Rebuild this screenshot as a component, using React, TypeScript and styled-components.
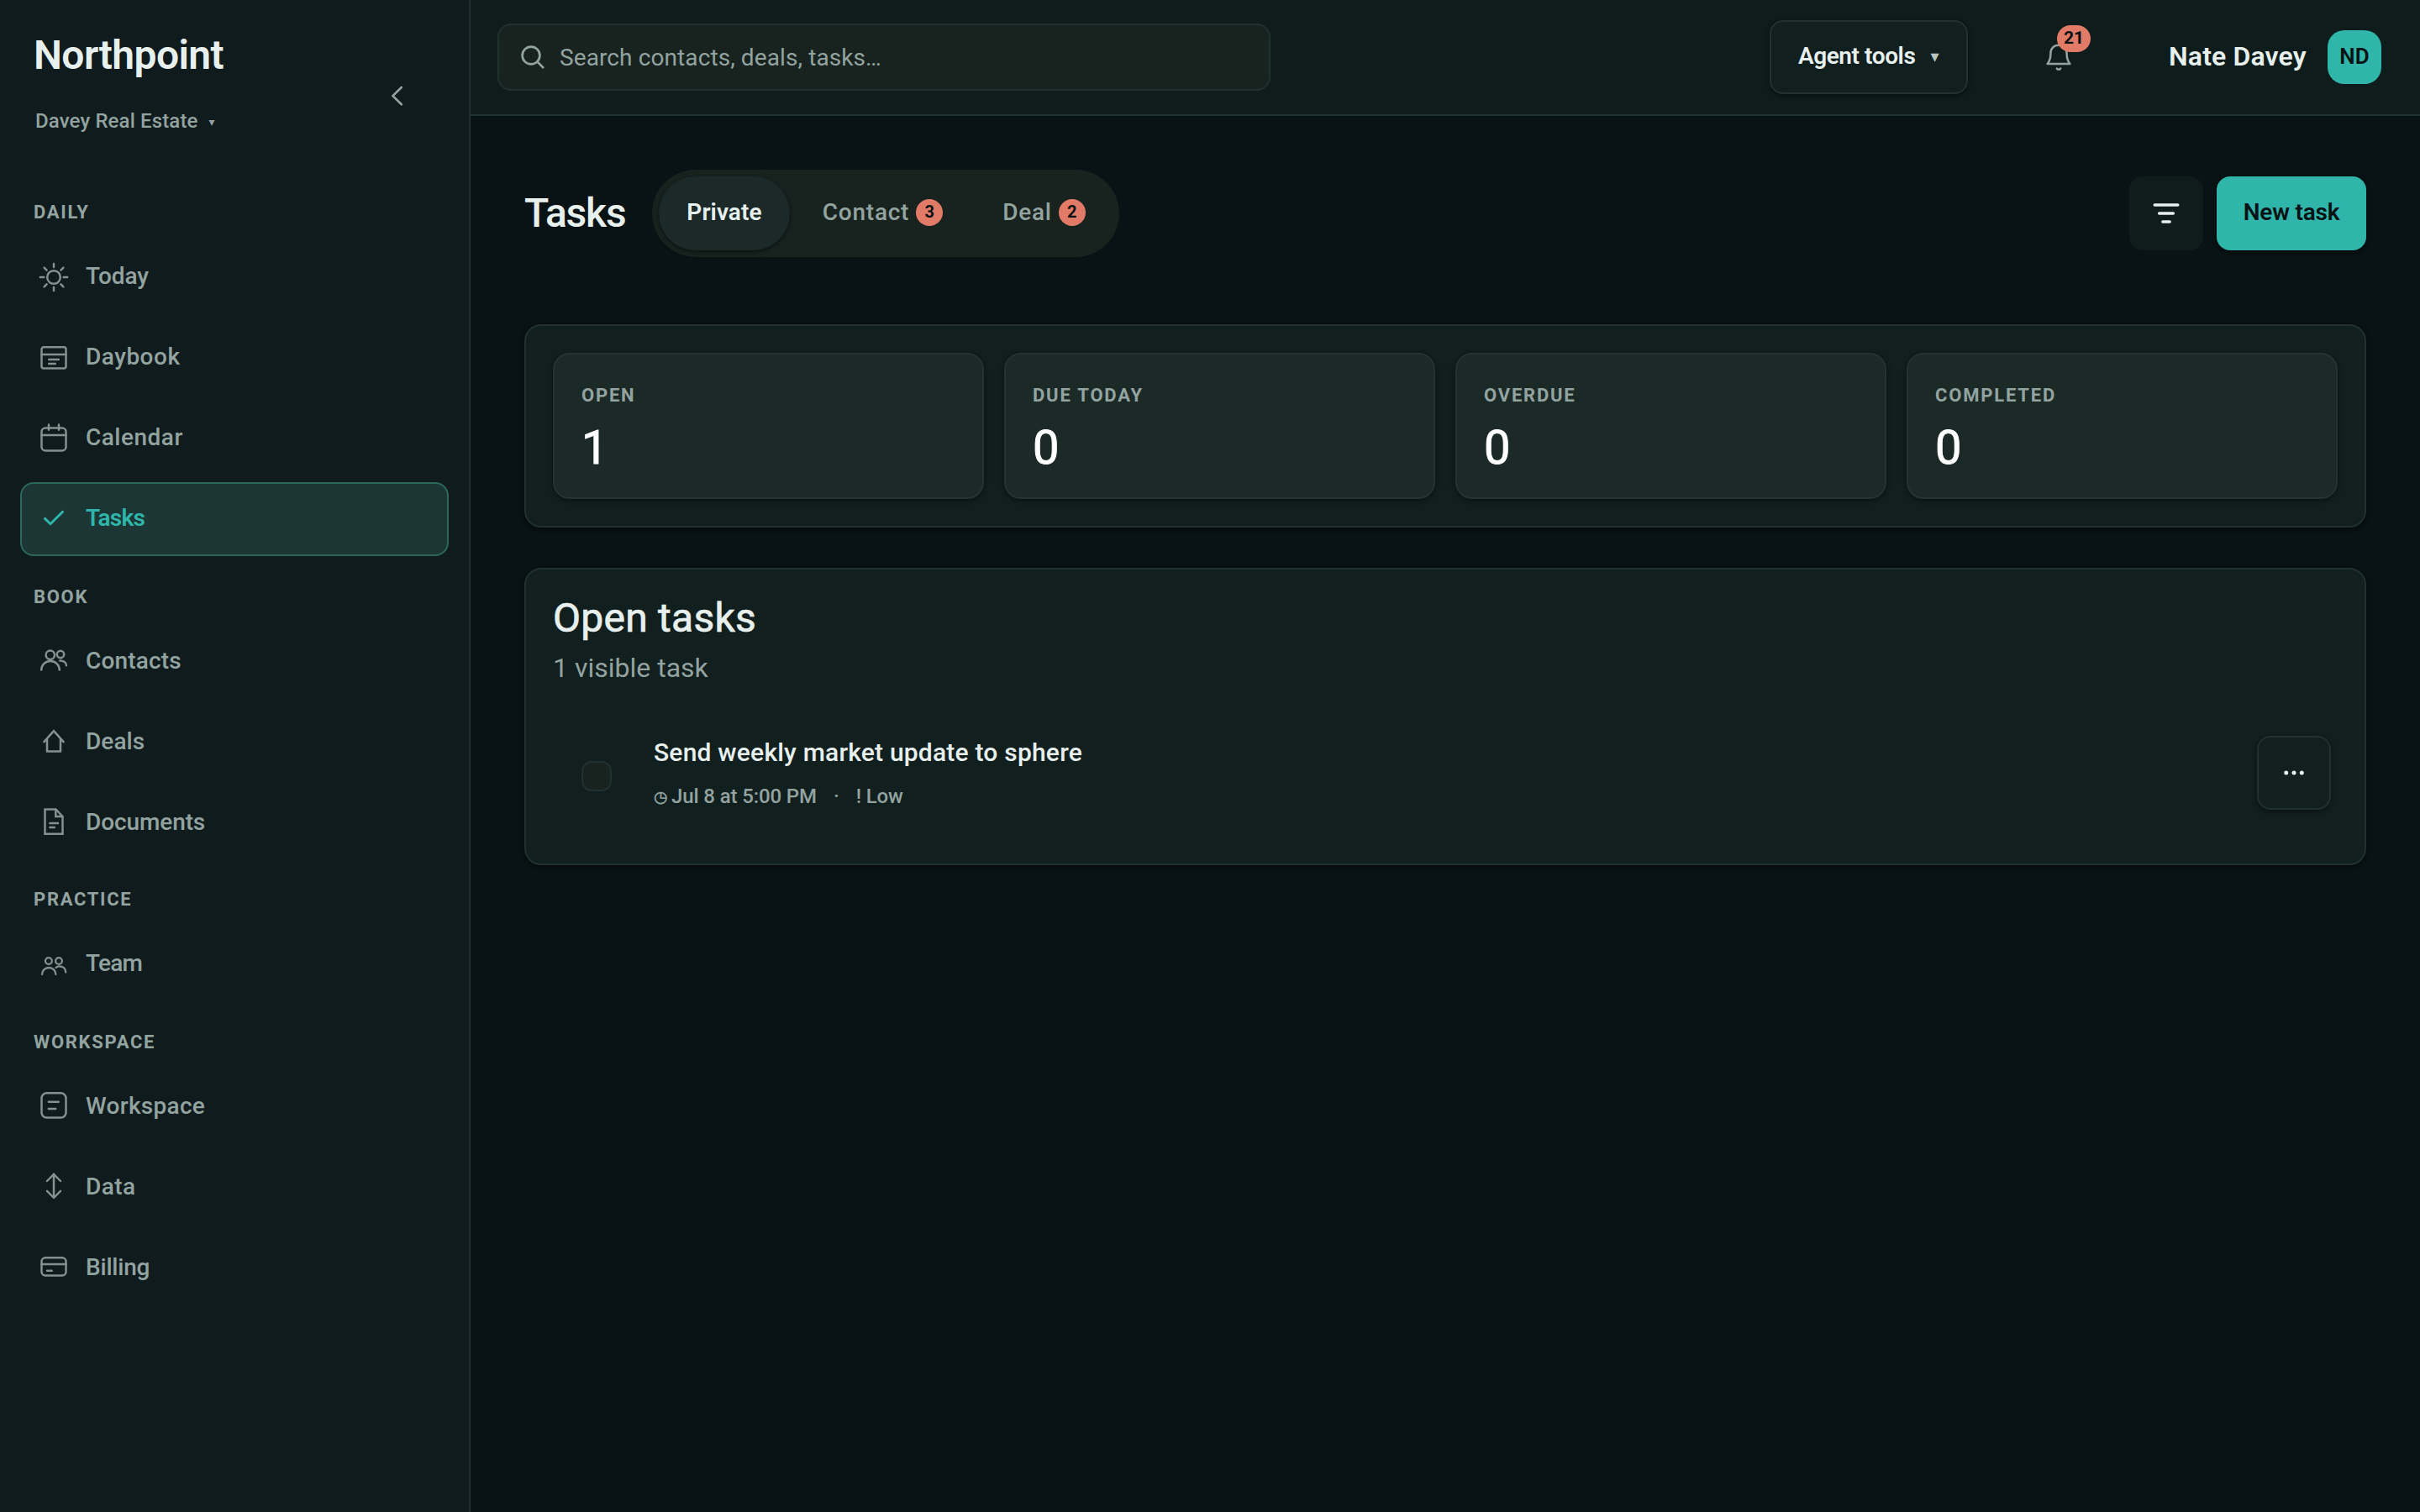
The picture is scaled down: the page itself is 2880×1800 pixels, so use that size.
import React from "react";
import styled, { createGlobalStyle, css } from "styled-components";

const c = {
  page: "#091214",
  sidebar: "#101b1d",
  header: "#0f1c1c",
  panel: "#121f1f",
  card: "#1c2a27",
  field: "#18231f",
  line: "#20312f",
  text: "#e8f0ee",
  muted: "#92a3a0",
  teal: "#2fb5aa",
  ink: "#081114",
  coral: "#e27a68",
};

const GlobalStyle = createGlobalStyle`
  *, *::before, *::after { box-sizing: border-box; }
  body {
    margin: 0;
    background: ${c.page};
    color: ${c.text};
    font-family: Roboto, "Liberation Sans", "DejaVu Sans", sans-serif;
  }
  button { font: inherit; color: inherit; border: 0; padding: 0; background: none; }
  h1, h2, p { margin: 0; }
`;

const shadow = css`
  box-shadow: 0 2px 6px rgba(0, 0, 0, 0.5);
`;

const Shell = styled.div`
  display: grid;
  grid-template-columns: 560px 1fr;
  width: 2880px;
  height: 1800px;
  overflow: hidden;
  white-space: nowrap;
`;

/* Sidebar */

const Sidebar = styled.aside`
  background: ${c.sidebar};
  border-right: 2px solid ${c.line};
  padding: 36px 24px 0;
`;

const BrandRow = styled.div`
  display: flex;
  justify-content: space-between;
  height: 168px;
  padding: 0 51px 0 16px;
`;

const BrandName = styled.div`
  font-size: 48px;
  font-weight: 600;
  line-height: 60px;
  letter-spacing: -0.6px;
`;

const OrgSwitch = styled.button`
  display: flex;
  align-items: center;
  gap: 13px;
  margin: 32px 0 0 2px;
  font-size: 24px;
  font-weight: 500;
  line-height: 32px;
  letter-spacing: 0.13px;
  color: ${c.muted};
`;

const Caret = styled.span<{ $size: number }>`
  padding-top: 1px;
  font-family: "DejaVu Sans", sans-serif;
  font-size: ${(p) => p.$size}px;
  line-height: 1;
`;

const CollapseButton = styled.button`
  width: 20px;
  height: 28px;
  margin-top: 64px;
  color: ${c.muted};
`;

const GroupLabel = styled.div<{ $before: number }>`
  padding: ${(p) => p.$before}px 0 15px 16px;
  font-size: 22px;
  font-weight: 700;
  line-height: 36px;
  letter-spacing: 1.7px;
  color: ${c.muted};
`;

const NavList = styled.nav`
  display: flex;
  flex-direction: column;
  gap: 8px;
`;

const NavItem = styled.a<{ $active?: boolean }>`
  display: flex;
  align-items: center;
  gap: 20px;
  height: 88px;
  padding: 0 20px;
  border: 2px solid ${(p) => (p.$active ? "#2d685f" : "transparent")};
  border-radius: 16px;
  background: ${(p) => (p.$active ? "#1b3635" : "transparent")};
  color: ${(p) => (p.$active ? c.teal : c.muted)};
  font-size: 28px;
  font-weight: ${(p) => (p.$active ? 600 : 500)};

  svg { opacity: ${(p) => (p.$active ? 1 : 0.88)}; }
`;

const NavText = styled.span<{ $track: number }>`
  padding-bottom: 3px;
  letter-spacing: ${(p) => p.$track}px;
`;

/* Top bar */

const Column = styled.div`
  display: flex;
  flex-direction: column;
  min-width: 0;
`;

const TopBar = styled.header`
  display: flex;
  align-items: center;
  height: 138px;
  padding: 0 46px 0 32px;
  background: ${c.header};
  border-bottom: 2px solid ${c.line};
`;

const SearchBox = styled.div`
  display: flex;
  align-items: center;
  gap: 18px;
  width: 920px;
  height: 80px;
  padding: 0 26px;
  margin-right: auto;
  border: 2px solid ${c.line};
  border-radius: 16px;
  background: ${c.field};
  color: ${c.muted};
  font-size: 28px;
  letter-spacing: 0.1px;
`;

const AgentTools = styled.button`
  display: flex;
  align-items: center;
  justify-content: center;
  gap: 18px;
  width: 236px;
  height: 88px;
  padding: 0 1px 3px 0;
  border: 2px solid ${c.line};
  border-radius: 16px;
  background: ${c.panel};
  font-size: 28px;
  font-weight: 600;
  letter-spacing: -0.42px;
  ${shadow}

  ${Caret} { color: #b9c5c2; }
`;

const BellButton = styled.button`
  position: relative;
  display: flex;
  align-items: center;
  justify-content: center;
  width: 88px;
  height: 88px;
  margin: 0 87px 0 64px;
  color: ${c.muted};
`;

const BellBadge = styled.span`
  position: absolute;
  top: 6px;
  left: 42px;
  width: 40px;
  height: 32px;
  border-radius: 16px;
  background: ${c.coral};
  color: ${c.ink};
  font-size: 21px;
  font-weight: 700;
  line-height: 31px;
  text-align: center;
`;

const UserName = styled.span`
  width: 189px;
  padding-bottom: 2px;
  font-size: 32px;
  font-weight: 600;
  letter-spacing: 0.15px;
`;

const Avatar = styled.div`
  width: 64px;
  height: 64px;
  border-radius: 20px;
  background: ${c.teal};
  color: ${c.ink};
  font-size: 26px;
  font-weight: 600;
  line-height: 63px;
  text-align: center;
`;

/* Page */

const Page = styled.main`
  flex: 1;
  display: flex;
  flex-direction: column;
  padding: 64px;
`;

const PageHead = styled.div`
  display: flex;
  align-items: center;
  height: 104px;
  margin-bottom: 80px;
`;

const Title = styled.h1`
  width: 152px;
  padding-bottom: 1px;
  font-size: 48px;
  font-weight: 500;
  letter-spacing: -1.2px;
`;

const Tabs = styled.div`
  display: flex;
  gap: 6px;
  padding: 8px;
  margin-right: auto;
  border-radius: 52px;
  background: ${c.field};
`;

const Tab = styled.button<{ $active?: boolean; $width: number; $track: number }>`
  display: flex;
  align-items: center;
  justify-content: center;
  gap: 8px;
  width: ${(p) => p.$width}px;
  height: 88px;
  padding: 0 0 3px ${(p) => (p.$active ? 0 : 1)}px;
  border-radius: 44px;
  font-size: 28px;
  font-weight: ${(p) => (p.$active ? 600 : 500)};
  letter-spacing: ${(p) => p.$track}px;
  color: ${(p) => (p.$active ? c.text : c.muted)};
  ${(p) =>
    p.$active &&
    css`
      background: #1b2928;
      ${shadow}
    `}
`;

const Count = styled.span`
  width: 32px;
  height: 32px;
  border-radius: 50%;
  background: ${c.coral};
  color: ${c.ink};
  font-size: 20px;
  font-weight: 700;
  letter-spacing: 0;
  line-height: 30px;
  text-align: center;
`;

const FilterButton = styled.button`
  display: grid;
  place-items: center;
  width: 88px;
  height: 88px;
  margin-right: 16px;
  border-radius: 16px;
  background: #101b1c;
`;

const NewTask = styled.button`
  width: 178px;
  height: 88px;
  padding-bottom: 3px;
  border-radius: 16px;
  background: ${c.teal};
  color: ${c.ink};
  font-size: 28px;
  font-weight: 600;
  letter-spacing: -0.19px;
  ${shadow}
`;

const Panel = styled.section`
  padding: 32px;
  border: 2px solid ${c.line};
  border-radius: 20px;
  background: ${c.panel};
  ${shadow}
`;

const Stats = styled(Panel)`
  display: grid;
  grid-template-columns: repeat(4, 1fr);
  gap: 24px;
  margin-bottom: 48px;
`;

const StatCard = styled.div`
  height: 174px;
  padding: 33px 32px;
  border: 2px solid #23332f;
  border-radius: 20px;
  background: ${c.card};
  ${shadow}
`;

const StatLabel = styled.div`
  font-size: 22px;
  font-weight: 700;
  line-height: 32px;
  letter-spacing: 1.8px;
  color: ${c.muted};
`;

const StatValue = styled.div`
  margin-top: 14px;
  font-size: 56px;
  font-weight: 400;
  line-height: 64px;
  color: #fff;
  -webkit-text-stroke: 0.9px currentColor;
`;

const TaskPanel = styled(Panel)`
  height: 354px;
`;

const PanelTitle = styled.h2`
  padding-top: 1px;
  font-size: 48px;
  font-weight: 400;
  line-height: 50px;
  letter-spacing: 0.25px;
  -webkit-text-stroke: 0.7px currentColor;
`;

const PanelNote = styled.p`
  margin-top: 14px;
  font-size: 32px;
  line-height: 40px;
  letter-spacing: 0;
  color: ${c.muted};
`;

const TaskRow = styled.div`
  display: flex;
  align-items: center;
  height: 88px;
  margin-top: 61px;
  padding: 0 8px 0 34px;
`;

const Checkbox = styled.span`
  width: 36px;
  height: 36px;
  margin: 8px 50px 0 0;
  border: 2px solid ${c.line};
  border-radius: 12px;
  background: ${c.field};
`;

const TaskBody = styled.div`
  flex: 1;
`;

const TaskTitle = styled.div`
  font-size: 30px;
  font-weight: 500;
  line-height: 40px;
  letter-spacing: 0.21px;
`;

const TaskMeta = styled.div`
  display: flex;
  gap: 20px;
  margin-top: 16px;
  font-size: 24px;
  font-weight: 500;
  line-height: 32px;
  letter-spacing: -0.12px;
  color: ${c.muted};
`;

const Due = styled.span`
  display: flex;
  width: 194px;
`;

const Clock = styled.span`
  width: 21px;
  font-family: "DejaVu Sans", sans-serif;
  font-size: 19px;
  line-height: 33px;
  -webkit-text-stroke: 0.6px currentColor;
`;

const MoreButton = styled.button`
  display: grid;
  place-items: center;
  width: 88px;
  height: 88px;
  border: 2px solid ${c.line};
  border-radius: 16px;
  background: ${c.panel};
  ${shadow}
`;

const Icon = ({ children, stroke = 2.5 }: { children: React.ReactNode; stroke?: number }) => (
  <svg
    width="36"
    height="36"
    viewBox="0 0 36 36"
    fill="none"
    stroke="currentColor"
    strokeWidth={stroke}
    strokeLinecap="round"
    strokeLinejoin="round"
  >
    {children}
  </svg>
);

const icons = {
  sun: (
    <Icon>
      <circle cx="18" cy="18" r="7.8" />
      <path d="M18 1.9v4.2M18 29.9v4.2M1.9 18h4.4M29.7 18h4.4M6.6 6.6l3 3M26.4 26.4l3 3M6.6 29.4l3-3M26.4 9.6l3-3" />
    </Icon>
  ),
  daybook: (
    <Icon>
      <rect x="3.5" y="5.3" width="29" height="25.2" rx="2.5" />
      <path d="M3.5 14h29M12.2 20h11.6M12.2 25h7.6" />
    </Icon>
  ),
  calendar: (
    <Icon>
      <rect x="3.5" y="5.6" width="29" height="26.8" rx="4.5" />
      <path d="M3.5 14h29M12 1.6v6.2M24 1.6v6.2" />
    </Icon>
  ),
  check: (
    <Icon stroke={3}>
      <path d="M7.5 17.4l6.5 6.4L28.6 9.3" />
    </Icon>
  ),
  contacts: (
    <Icon>
      <circle cx="13.8" cy="9.7" r="5.2" />
      <circle cx="26" cy="9" r="4.2" />
      <path d="M3.2 27.6c0-6 4.6-10.6 10.8-10.6s10.8 4.6 10.8 10.6M25.3 16.4c4.4 0 7.6 2.2 7.7 5.8" />
    </Icon>
  ),
  deals: (
    <Icon>
      <path d="M6.4 17.2L18 4.2l11.6 13M10 13.6v14.8h16V13.6" strokeLinejoin="miter" />
    </Icon>
  ),
  documents: (
    <Icon>
      <path d="M7.5 1.4h13l8 8.6v20.8h-21zM20.3 1.4V10h8.2" strokeLinejoin="miter" />
      <path d="M13.4 18h9.6M13.4 23h5.4" />
    </Icon>
  ),
  team: (
    <Icon stroke={2.3}>
      <circle cx="11.9" cy="14" r="3.9" />
      <circle cx="24" cy="14" r="3.9" />
      <path d="M4 30c0-4.5 3.4-8 8.2-8s8.2 3.5 8.2 8M20.6 21.9c1-1 2.3-1.6 3.9-1.6 4.4 0 7.7 2.7 7.7 7.2" />
    </Icon>
  ),
  workspace: (
    <Icon>
      <rect x="3.5" y="1.3" width="29" height="29.3" rx="6" />
      <path d="M11.8 11.8h12M11.8 20h8.4" />
    </Icon>
  ),
  data: (
    <Icon>
      <path d="M18 1.8v28M10 10l8-8.2 8 8.2M10 21.8l8 8.2 8-8.2" />
    </Icon>
  ),
  billing: (
    <Icon>
      <rect x="3.5" y="5.3" width="29" height="21.2" rx="4.5" />
      <path d="M3.5 13h29M10 20.8h5.7" />
    </Icon>
  ),
};

type Entry = { name: string; icon: keyof typeof icons; track: number; active?: boolean };

const groups: { label: string; before: number; items: Entry[] }[] = [
  {
    label: "DAILY",
    before: 31,
    items: [
      { name: "Today", icon: "sun", track: -0.1 },
      { name: "Daybook", icon: "daybook", track: 0.5 },
      { name: "Calendar", icon: "calendar", track: 0.5 },
      { name: "Tasks", icon: "check", track: -0.75, active: true },
    ],
  },
  {
    label: "BOOK",
    before: 31,
    items: [
      { name: "Contacts", icon: "contacts", track: 0.15 },
      { name: "Deals", icon: "deals", track: 0.05 },
      { name: "Documents", icon: "documents", track: -0.1 },
    ],
  },
  { label: "PRACTICE", before: 29, items: [{ name: "Team", icon: "team", track: -0.8 }] },
  {
    label: "WORKSPACE",
    before: 31,
    items: [
      { name: "Workspace", icon: "workspace", track: 0.3 },
      { name: "Data", icon: "data", track: 0.4 },
      { name: "Billing", icon: "billing", track: -0.2 },
    ],
  },
];

const stats = [
  ["OPEN", "1"],
  ["DUE TODAY", "0"],
  ["OVERDUE", "0"],
  ["COMPLETED", "0"],
];

export default function App() {
  return (
    <>
      <GlobalStyle />
      <Shell>
        <Sidebar>
          <BrandRow>
            <div>
              <BrandName>Northpoint</BrandName>
              <OrgSwitch>
                Davey Real Estate <Caret $size={14}>▾</Caret>
              </OrgSwitch>
            </div>
            <CollapseButton aria-label="Collapse sidebar">
              <svg width="20" height="28" viewBox="0 0 20 28" fill="none" stroke="currentColor" strokeWidth="2.7" strokeLinecap="round" strokeLinejoin="round">
                <path d="M14.8 4L4.4 14.1l10.4 10.2" />
              </svg>
            </CollapseButton>
          </BrandRow>
          {groups.map((g) => (
            <React.Fragment key={g.label}>
              <GroupLabel $before={g.before}>{g.label}</GroupLabel>
              <NavList>
                {g.items.map((i) => (
                  <NavItem key={i.name} $active={i.active}>
                    {icons[i.icon]}
                    <NavText $track={i.track}>{i.name}</NavText>
                  </NavItem>
                ))}
              </NavList>
            </React.Fragment>
          ))}
        </Sidebar>

        <Column>
          <TopBar>
            <SearchBox>
              <svg width="28" height="28" viewBox="0 0 28 28" fill="none" stroke="currentColor" strokeWidth="2.7" strokeLinecap="round">
                <circle cx="12" cy="12" r="10.4" />
                <path d="M19.6 19.6l6.6 6.6" />
              </svg>
              Search contacts, deals, tasks…
            </SearchBox>
            <AgentTools>
              Agent tools <Caret $size={20}>▾</Caret>
            </AgentTools>
            <BellButton aria-label="Notifications">
              <svg width="36" height="36" viewBox="0 0 36 36" fill="none" stroke="currentColor" strokeWidth="2.5" strokeLinecap="round" strokeLinejoin="round">
                <path d="M4.6 26C7.6 22.5 8.4 19 8.4 13.5 8.4 7.5 12.5 3.8 18 3.8s9.6 3.7 9.6 9.7c0 5.5.8 9 3.8 12.5z" />
                <path d="M15.8 31.6c.8 1.5 3.6 1.5 4.4 0" />
              </svg>
              <BellBadge>21</BellBadge>
            </BellButton>
            <UserName>Nate Davey</UserName>
            <Avatar>ND</Avatar>
          </TopBar>

          <Page>
            <PageHead>
              <Title>Tasks</Title>
              <Tabs>
                <Tab $active $width={156} $track={0.1}>Private</Tab>
                <Tab $width={208} $track={0.75}>
                  Contact <Count>3</Count>
                </Tab>
                <Tab $width={164} $track={0.7}>
                  Deal <Count>2</Count>
                </Tab>
              </Tabs>
              <FilterButton aria-label="Filter">
                <svg width="36" height="36" viewBox="0 0 36 36" fill="none" stroke="currentColor" strokeWidth="3.4" strokeLinecap="round">
                  <path d="M4.2 8h27.6M9.6 18h16.8M13.8 28h8.4" />
                </svg>
              </FilterButton>
              <NewTask>New task</NewTask>
            </PageHead>

            <Stats>
              {stats.map(([label, value]) => (
                <StatCard key={label}>
                  <StatLabel>{label}</StatLabel>
                  <StatValue>{value}</StatValue>
                </StatCard>
              ))}
            </Stats>

            <TaskPanel>
              <PanelTitle>Open tasks</PanelTitle>
              <PanelNote>1 visible task</PanelNote>
              <TaskRow>
                <Checkbox />
                <TaskBody>
                  <TaskTitle>Send weekly market update to sphere</TaskTitle>
                  <TaskMeta>
                    <Due>
                      <Clock>◷</Clock>Jul 8 at 5:00 PM
                    </Due>
                    <span>·</span>
                    <span>! Low</span>
                  </TaskMeta>
                </TaskBody>
                <MoreButton aria-label="More">
                  <svg width="24" height="6" viewBox="0 0 24 6" fill="currentColor">
                    <circle cx="2.7" cy="3" r="2.5" />
                    <circle cx="12" cy="3" r="2.5" />
                    <circle cx="21.3" cy="3" r="2.5" />
                  </svg>
                </MoreButton>
              </TaskRow>
            </TaskPanel>
          </Page>
        </Column>
      </Shell>
    </>
  );
}
